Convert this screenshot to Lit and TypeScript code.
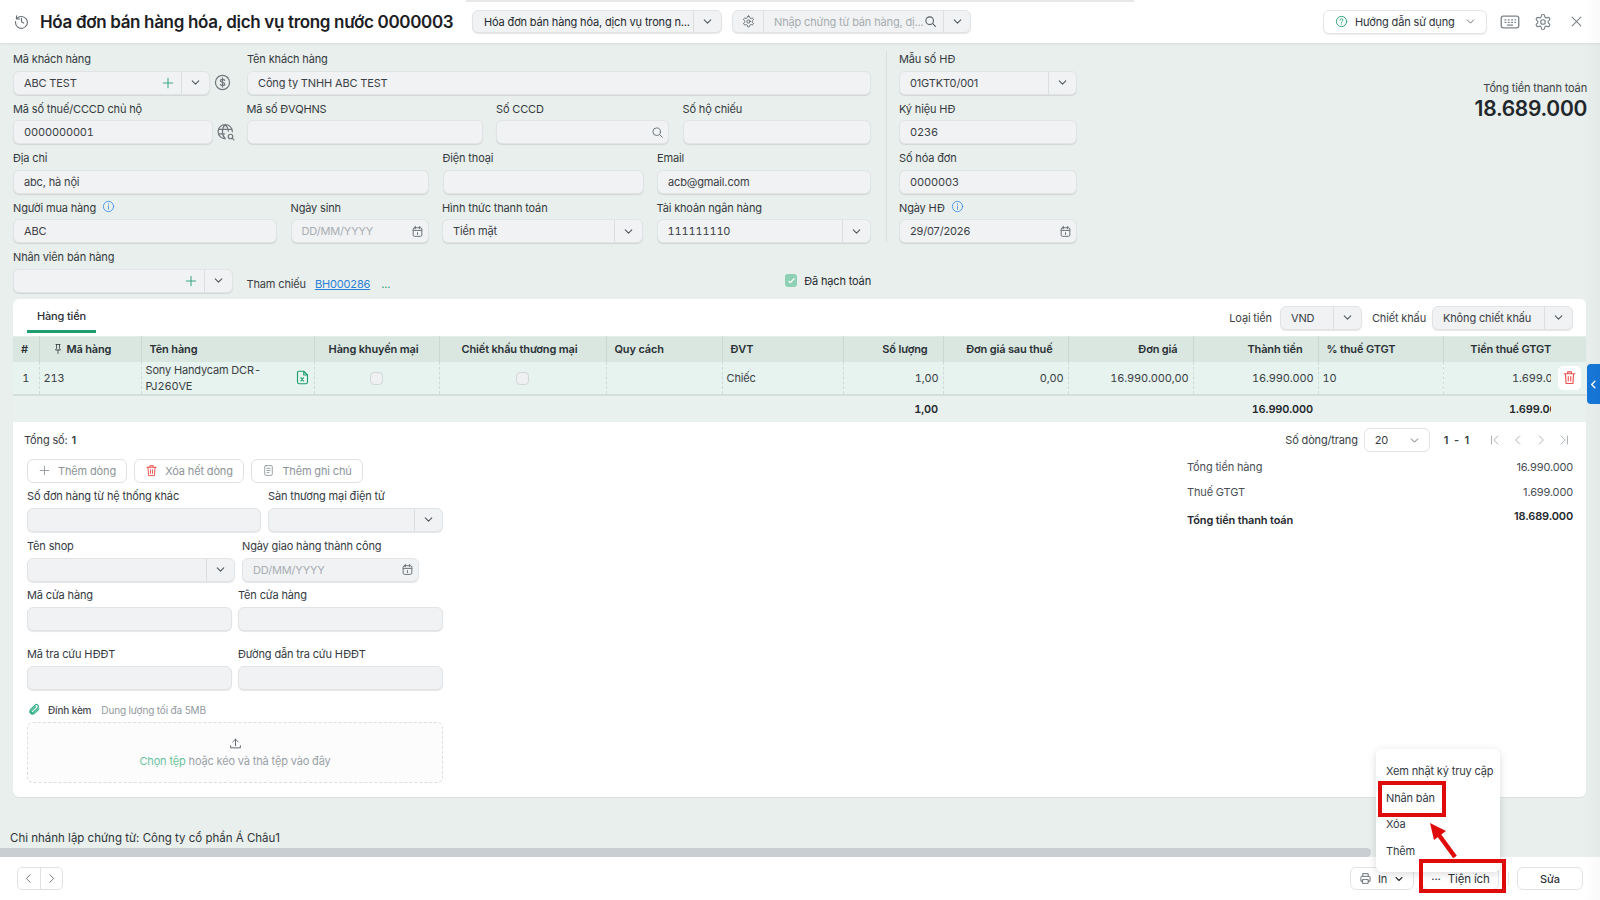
import { LitElement, html, css, svg } from "lit";
import { customElement } from "lit/decorators.js";

const paths: Record<string, unknown> = {
  chevDown: svg`<path d="M6 9l6 6 6-6"/>`,
  chevLeft: svg`<path d="M15 5l-7 7 7 7"/>`,
  chevRight: svg`<path d="M9 5l7 7-7 7"/>`,
  first: svg`<path d="M17 5l-7 7 7 7M6 5v14"/>`,
  last: svg`<path d="M7 5l7 7-7 7M18 5v14"/>`,
  plus: svg`<path d="M12 4v16M4 12h16"/>`,
  close: svg`<path d="M5 5l14 14M19 5L5 19"/>`,
  search: svg`<circle cx="10.5" cy="10.5" r="7"/><path d="M16 16l5 5"/>`,
  calendar: svg`<rect x="4" y="5" width="16" height="16" rx="2.5"/><path d="M4 10h16M8 2.5V7M16 2.5V7M12 14v3.5"/>`,
  info: svg`<circle cx="12" cy="12" r="9.5"/><path d="M12 11v6M12 7v1"/>`,
  help: svg`<circle cx="12" cy="12" r="9.5"/><path d="M9.5 9.5a2.5 2.5 0 1 1 3.6 2.2c-.8.4-1.1 1-1.1 1.8M12 16.5v.5"/>`,
  dollar: svg`<circle cx="12" cy="12" r="10"/><path d="M15 9c-.5-1-1.600-1.500-3-1.500-1.700 0-3 .8-3 2.200 0 3 6.200 1.500 6.200 4.500 0 1.400-1.300 2.300-3.200 2.300-1.400 0-2.600-.6-3.100-1.600M12 5.500v13"/>`,
  globe: svg`<path d="M11 21a9.500 9.500 0 1 1 9.500-9.500M2 8.500h18M2 14.500h8M11 2c-5 5-5 14 0 19M11 2c2.800 2.800 4 6 4.200 9"/><circle cx="18" cy="18" r="3"/><path d="M20.200 20.200l2.300 2.300"/>`,
  gear: svg`<circle cx="12" cy="12" r="3"/><path d="M12.220 2h-.44a2 2 0 0 0-2 2v.18a2 2 0 0 1-1 1.730l-.43.250a2 2 0 0 1-2 0l-.15-.08a2 2 0 0 0-2.730.730l-.22.380a2 2 0 0 0 .730 2.730l.15.100a2 2 0 0 1 1 1.720v.510a2 2 0 0 1-1 1.740l-.15.090a2 2 0 0 0-.730 2.730l.22.380a2 2 0 0 0 2.730.730l.15-.08a2 2 0 0 1 2 0l.43.250a2 2 0 0 1 1 1.730V20a2 2 0 0 0 2 2h.44a2 2 0 0 0 2-2v-.18a2 2 0 0 1 1-1.730l.43-.25a2 2 0 0 1 2 0l.15.080a2 2 0 0 0 2.730-.730l.22-.39a2 2 0 0 0-.730-2.730l-.15-.08a2 2 0 0 1-1-1.740v-.5a2 2 0 0 1 1-1.740l.15-.09a2 2 0 0 0 .730-2.730l-.22-.38a2 2 0 0 0-2.730-.730l-.15.080a2 2 0 0 1-2 0l-.43-.25a2 2 0 0 1-1-1.730V4a2 2 0 0 0-2-2z"/>`,
  keyboard: svg`<rect x="1.500" y="5" width="21" height="14" rx="2.500"/><path d="M6 9.500h1M10 9.500h1M14 9.500h1M18 9.500h.500M6 12.500h1M10 12.500h1M14 12.500h1M18 12.500h.500M9 15.800h6"/>`,
  history: svg`<path d="M4.500 7.500A9.500 9.500 0 1 1 2.500 12M4 3v5h5M12 7v5.500l3.500 2"/>`,
  pin: svg`<path d="M8 3h8M9 3v8l-2 3h10l-2-3V3M12 14v7"/>`,
  excel: svg`<path d="M6 2h8l6 6v11a3 3 0 0 1-3 3H7a3 3 0 0 1-3-3V4a2 2 0 0 1 2-2zM14 2v6h6M9.500 12.500l4 5M13.500 12.500l-4 5"/>`,
  trash: svg`<path d="M3.500 6h17M9 6V3h6v3M5.500 6l1 15.500h11l1-15.500M10 10.500v7M14 10.500v7"/>`,
  note: svg`<rect x="5" y="3" width="14" height="18" rx="2"/><path d="M9 8h6M9 12h6M9 16h4"/>`,
  printer: svg`<path d="M7 8V3h10v5M7 17H3.500V9.500A1.500 1.500 0 0 1 5 8h14a1.500 1.500 0 0 1 1.500 1.500V17H17"/><rect x="7" y="14" width="10" height="7"/>`,
  upload: svg`<path d="M12 16V4M7 9l5-5 5 5M3 16v4h18v-4"/>`,
  clip: svg`<path d="M20 11l-8.500 8.500a5 5 0 0 1-7-7L13 4a3.500 3.500 0 0 1 5 5l-8.500 8.500a2 2 0 0 1-3-3L14 7"/>`,
};

const icon = (name: string, size = 14, sw = 2) =>
  html`<svg class="ic" width=${size} height=${size} viewBox="0 0 24 24" fill="none" stroke="currentColor" stroke-width=${sw} stroke-linecap="round" stroke-linejoin="round">${paths[name]}</svg>`;

@customElement("app-root")
export class AppRoot extends LitElement {
  static styles = css`
    :host {
      display: flex;
      flex-direction: column;
      position: relative;
      width: 1600px;
      height: 900px;
      overflow: hidden;
      background: #fff;
      color: #24292e;
      font: 11px/16px Inter, "Noto Sans", sans-serif;
      letter-spacing: -0.15px;
    }
    .ic { display: block; flex: none; }

    /* top bar */
    .topbar {
      height: 43px;
      flex: none;
      box-sizing: border-box;
      display: flex;
      align-items: center;
      padding: 0 16px 0 14px;
      position: relative;
      box-shadow: 0 1px 2px rgba(0, 0, 0, 0.08);
      z-index: 1;
    }
    .loadbar {
      position: absolute;
      top: 0;
      left: 466px;
      width: 668px;
      height: 2px;
      background: #e6e8e8;
    }
    .hist { color: #6a7176; margin-right: 11px; }
    .title { font-size: 17px; line-height: 24px; font-weight: 600; letter-spacing: -0.33px; color: #1c2024; white-space: nowrap; width: 432px; }
    .group {
      height: 23px;
      box-sizing: border-box;
      display: flex;
      align-items: center;
      background: #f1f2f4;
      border: 1px solid #e1e4e6;
      border-radius: 6px;
      box-shadow: 0 1px 1px rgba(0, 0, 0, 0.1);
    }
    .doc-type { width: 250px; }
    .doc-type .val { flex: 1; padding-left: 11px; white-space: nowrap; }
    .doc-search { width: 239px; margin-left: 10px; }
    .gear-cell { width: 30px; height: 100%; display: flex; align-items: center; justify-content: center; border-right: 1px solid #dfe2e4; color: #5f666b; }
    .ph { flex: 1; padding-left: 10px; color: #a6acb0; white-space: nowrap; }
    .s-ic { color: #565d62; margin-right: 6px; }
    .arrow {
      width: 27px;
      height: 100%;
      flex: none;
      display: flex;
      align-items: center;
      justify-content: center;
      border-left: 1px solid #dcdfe1;
      color: #50575c;
    }
    .doc-search .arrow { width: 26px; }
    .spacer { flex: 1; }
    .help {
      width: 164px;
      height: 24px;
      box-sizing: border-box;
      display: flex;
      align-items: center;
      padding-left: 11px;
      gap: 7px;
      background: #fff;
      border: 1px solid #e3e6e8;
      border-radius: 6px;
      box-shadow: 0 1px 1px rgba(0, 0, 0, 0.08);
      color: #2d3338;
      white-space: nowrap;
    }
    .help .g { color: #2ba678; }
    .help .d { color: #6a7176; margin-left: 2px; }
    .tool { color: #7d8489; margin-left: 14px; }
    .tool.kb { margin-left: 13px; }
    .tool.x { margin-left: 17px; }

    /* main */
    .main {
      flex: 1;
      min-height: 0;
      display: flex;
      flex-direction: column;
      background: #e9efec;
    }
    .form {
      height: 256px;
      flex: none;
      box-sizing: border-box;
      padding: 7.5px 13px 0;
      display: flex;
    }
    .form-left { width: 858px; display: flex; flex-direction: column; gap: 5.5px; }
    .row { display: grid; column-gap: 13.5px; }
    .r1 { grid-template-columns: 218px 1fr; column-gap: 16px; }
    .r2 { grid-template-columns: 220px 236px 173px 1fr; }
    .r3 { grid-template-columns: 416px 201px 1fr; }
    .r4 { grid-template-columns: 264px 138px 201px 1fr; }
    .r5 { grid-template-columns: 220px 1fr; }
    .field { min-width: 0; }
    .lab { height: 20px; box-sizing: border-box; padding-top: 0.5px; display: flex; gap: 6px; color: #343a3f; white-space: nowrap; }
    .lab .i { color: #3b8fe8; }
    .inp {
      height: 24px;
      box-sizing: border-box;
      display: flex;
      align-items: center;
      background: #f1f2f4;
      border: 1px solid #e1e4e6;
      border-radius: 6px;
      box-shadow: 0 1px 1px rgba(0, 0, 0, 0.1);
      color: #3a4045;
    }
    .inp .val { flex: 1; min-width: 0; padding-left: 10px; white-space: nowrap; }
    .inp .muted { color: #a9afb3; }
    .inp .num { font-variant-numeric: tabular-nums; }
    .inp .plus { color: #3aa981; margin-right: 6px; }
    .inp .end { color: #6c7378; margin-right: 4px; }
    .with-ic { display: flex; align-items: center; gap: 4px; }
    .with-ic .inp { flex: 1; min-width: 0; }
    .with-ic .side { color: #71787d; }
    .with-ic .inp.fixed { flex: none; width: 200px; }
    .globe { margin-right: -3px; }
    .ref { display: flex; align-items: center; padding-top: 20px; height: 24px; }
    .ref .t { color: #3a4045; margin-top: 6px; }
    .ref a { margin: 6px 0 0 9px; color: #2b7fd6; text-decoration: underline; }
    .ref .dots { margin: 6px 0 0 11px; color: #2b9a76; }
    .ref .chk { margin-left: auto; display: flex; align-items: center; gap: 7px; }
    .tick {
      width: 12px;
      height: 13px;
      border-radius: 3px;
      background: #8ed0b4;
      color: #fff;
      display: flex;
      align-items: center;
      justify-content: center;
    }
    .divider { width: 1px; height: 191px; background: #d8dfdc; margin: 0.5px 0 0 15px; }
    .form-right { width: 178px; margin-left: 12px; display: flex; flex-direction: column; gap: 5.5px; }
    .total { margin-left: auto; padding-top: 29px; text-align: right; }
    .total .l { color: #3b4146; margin-bottom: -1px; }
    .total .v { font-size: 21px; line-height: 28px; font-weight: 600; letter-spacing: -0.3px; color: #22272b; }

    /* card */
    .card {
      height: 498px;
      flex: none;
      margin: 0 14px 0 13px;
      background: #fff;
      border-radius: 6px;
      box-shadow: 0 1px 1px rgba(0, 0, 0, 0.06);
      display: flex;
      flex-direction: column;
      overflow: hidden;
    }
    .tabbar { height: 37px; flex: none; display: flex; align-items: center; padding-right: 13px; box-sizing: border-box; }
    .tab {
      margin-left: 14px;
      width: 69px;
      height: 37px;
      box-sizing: border-box;
      padding-top: 9px;
      text-align: center;
      font-weight: 500;
      color: #2a3035;
      position: relative;
    }
    .tab::after { content: ""; position: absolute; left: 0; right: 0; top: 31px; height: 2.5px; background: #1e9e6f; }
    .tabbar .lbl { color: #3b4146; margin-right: 8px; }
    .tabbar .lbl.d { margin-right: 6px; }
    .sel { margin-right: 10px; }
    .sel.cur { width: 82px; }
    .sel.disc { width: 141px; margin-right: 0; }

    table { width: 1573px; table-layout: fixed; border-collapse: collapse; flex: none; }
    th {
      height: 25px;
      padding: 0 8px;
      box-sizing: border-box;
      background: #d9e7e0;
      border-right: 1px solid #c9d8d1;
      border-top: 1px solid #e3ece8;
      font-weight: 600;
      text-align: left;
      color: #2a3035;
      white-space: nowrap;
    }
    th.c { text-align: center; padding-right: 14px; }
    th.r { text-align: right; padding-right: 15px; }
    th:last-child { border-right: 0; padding-right: 35px; }
    th .w { display: flex; align-items: center; gap: 3px; padding-left: 4px; }
    td {
      height: 31px;
      padding: 0 4px;
      box-sizing: border-box;
      background: #e6f3ee;
      border-right: 1px dashed #d0dcd7;
      border-bottom: 2px solid #d6dedb;
      color: #3a4045;
      font-variant-numeric: tabular-nums;
    }
    td.c { text-align: center; }
    td.r { text-align: right; }
    td:last-child { border-right: 0; padding-right: 35px; position: relative; }
    .prod { display: flex; align-items: center; gap: 20px; line-height: 16px; }
    .prod span { width: 130px; }
    .prod .ic { color: #1e9e6f; }
    .box { display: inline-block; vertical-align: middle; width: 13px; height: 13px; box-sizing: border-box; background: #eef0f1; border: 1px solid #d3d7d9; border-radius: 4px; }
    .clip { display: block; width: 39px; margin-left: auto; overflow: hidden; white-space: nowrap; }
    .clip.b { width: 42px; }
    .del {
      position: absolute;
      top: 4px;
      right: 5px;
      width: 23px;
      height: 24px;
      background: #fff;
      border-radius: 5px;
      color: #ef4f4f;
      display: flex;
      align-items: center;
      justify-content: center;
    }
    .sum td { height: 27px; background: #e9f1ee; border: 0; font-weight: 600; color: #24292e; }
    .sum td.r { padding-right: 5px; }
    .sum td:last-child { padding-right: 35px; }

    /* lower */
    .lower { flex: 1; min-height: 0; display: flex; justify-content: space-between; padding: 7px 13px 0 14px; }
    .lleft { width: 416px; display: flex; flex-direction: column; }
    .count { margin-left: -3px; height: 23px; display: flex; align-items: center; color: #3a4045; }
    .count b { font-weight: 600; margin-left: 4px; }
    .btns { display: flex; gap: 7px; margin-top: 7px; margin-bottom: 5px; }
    .btn {
      height: 24px;
      box-sizing: border-box;
      display: flex;
      align-items: center;
      justify-content: center;
      gap: 7px;
      background: #fff;
      border: 1px solid #dfe2e4;
      border-radius: 6px;
      color: #8d9498;
    }
    .btn.add { width: 100px; }
    .btn.clr { width: 110px; }
    .btn.clr .ic { color: #e9524f; }
    .btn.nt { width: 112px; }
    .lr { display: grid; }
    .l1 { grid-template-columns: 234px 175px; column-gap: 7px; margin-bottom: 6px; }
    .l2 { grid-template-columns: 208px 177px; column-gap: 7px; margin-bottom: 5px; }
    .l3 { grid-template-columns: 205px 205px; column-gap: 6px; margin-bottom: 15px; }
    .l4 { grid-template-columns: 205px 205px; column-gap: 6px; }
    .attach { height: 20px; margin-top: 10px; display: flex; align-items: center; margin-left: 1px; font-size: 10px; }
    .attach .ic { color: #2fb083; }
    .attach b { font-weight: 500; margin-left: 7px; color: #454b50; }
    .attach span { margin-left: 10px; color: #92999d; }
    .drop {
      height: 61px;
      margin-top: 2px;
      box-sizing: border-box;
      border: 1px dashed #dcdfe1;
      border-radius: 6px;
      background: #fcfcfd;
      display: flex;
      flex-direction: column;
      align-items: center;
      padding-top: 14px;
      gap: 3px;
      color: #9aa1a5;
    }
    .drop .ic { color: #62696e; }
    .drop em { font-style: normal; color: #69c2a0; }

    .lright { width: 386px; display: flex; flex-direction: column; }
    .pager { display: flex; justify-content: flex-end; align-items: center; height: 23px; margin-right: 2px; color: #3a4045; }
    .page-sel {
      width: 66px;
      height: 24px;
      box-sizing: border-box;
      margin-left: 6px;
      display: flex;
      align-items: center;
      justify-content: space-between;
      padding: 0 8px 0 10px;
      border: 1px solid #e1e4e6;
      border-radius: 6px;
    }
    .page-sel .ic { color: #6a7176; }
    .range { font-weight: 600; margin: 0 19px 0 14px; word-spacing: 3px; }
    .pg { display: flex; gap: 9px; color: #a7adb1; }
    .sumrow { display: flex; justify-content: space-between; color: #4a5055; height: 25px; }
    .sumrow.first { margin-top: 7px; }
    .sumrow.t { color: #24292e; font-weight: 600; }
    .sumrow.t span:first-child { margin-top: 3px; }
    .sumrow.t span:last-child { margin-top: -1px; }

    .branch { margin-top: auto; height: 18px; padding-left: 10px; font-size: 11.5px; letter-spacing: 0; color: #2e3439; }
    .scroll { height: 9px; flex: none; background: #e9efec; }
    .scroll div { width: 1371px; height: 9px; background: #c9ced2; border-radius: 0 5px 5px 0; }

    /* footer */
    .footer {
      height: 43px;
      flex: none;
      box-sizing: border-box;
      display: flex;
      align-items: center;
      padding: 0 17px;
      gap: 8px;
    }
    .pn { display: flex; width: 46px; height: 23px; box-sizing: border-box; border: 1px solid #dfe2e4; border-radius: 5px; color: #6a7176; }
    .pn div { flex: 1; display: flex; align-items: center; justify-content: center; }
    .pn div + div { border-left: 1px solid #dfe2e4; }
    .fbtn {
      height: 23px;
      box-sizing: border-box;
      display: flex;
      align-items: center;
      justify-content: center;
      gap: 6px;
      background: #fff;
      border: 1px solid #e1e4e6;
      border-radius: 6px;
      color: #2d3338;
    }
    .fbtn.print { width: 64px; margin-left: auto; }
    .fbtn.print .ic:first-child { color: #62696e; }
    .fbtn.util { width: 77px; gap: 7px; font-size: 11.5px; }
    .sep { width: 1px; height: 13px; background: #e4e7e8; margin-left: 1px; }
    .fbtn.edit { width: 66px; font-weight: 500; }

    /* dropdown, annotations and edge shade lie over the page */
    .menu {
      position: absolute;
      left: 1376px;
      top: 749px;
      width: 124px;
      height: 123px;
      box-sizing: border-box;
      padding: 9px 0 0 10px;
      background: #fff;
      border-radius: 6px;
      box-shadow: 0 2px 8px rgba(0, 0, 0, 0.14);
      z-index: 2;
      color: #343a3f;
    }
    .menu div { height: 26.5px; line-height: 26.5px; white-space: nowrap; }
    .mark { position: absolute; box-sizing: border-box; border: 4px solid #df0a0a; z-index: 3; pointer-events: none; }
    .m-dup { left: 1378px; top: 781px; width: 68px; height: 36px; }
    .m-util { left: 1419px; top: 859px; width: 87px; height: 34px; }
    .red-arrow { position: absolute; left: 1420px; top: 815px; z-index: 3; }
    .side-tab {
      position: absolute;
      right: 0;
      top: 364px;
      width: 13px;
      height: 40px;
      background: #1677d8;
      border-radius: 4px 0 0 4px;
      color: #fff;
      display: flex;
      align-items: center;
      justify-content: center;
      z-index: 1;
    }
    .shade {
      position: absolute;
      top: 0;
      bottom: 0;
      right: 0;
      width: 16px;
      background: linear-gradient(to right, rgba(0, 0, 0, 0), rgba(0, 0, 0, 0.025));
      pointer-events: none;
      z-index: 1;
    }
  `;

  private field(label: string, value = "", opts: { info?: boolean; end?: string; arrow?: boolean; muted?: boolean } = {}) {
    return html`<div class="field">
      <div class="lab">${label}${opts.info ? html`<span class="i">${icon("info", 13, 1.6)}</span>` : ""}</div>
      ${this.input(value, opts)}
    </div>`;
  }

  private input(value: string, opts: { end?: string; arrow?: boolean; muted?: boolean; plus?: boolean } = {}) {
    const num = /^\d+$/.test(value) ? "num" : "";
    return html`<div class="inp">
      <span class="val ${num} ${opts.muted ? "muted" : ""}">${value}</span>
      ${opts.plus ? html`<span class="plus">${icon("plus", 14, 1.8)}</span>` : ""}
      ${opts.end ? html`<span class="end">${icon(opts.end, 13, 1.8)}</span>` : ""}
      ${opts.arrow ? html`<span class="arrow">${icon("chevDown", 13, 2)}</span>` : ""}
    </div>`;
  }

  render() {
    return html`
      <header class="topbar">
        <div class="loadbar"></div>
        <span class="hist">${icon("history", 15, 1.8)}</span>
        <div class="title">Hóa đơn bán hàng hóa, dịch vụ trong nước 0000003</div>
        <div class="group doc-type">
          <span class="val">Hóa đơn bán hàng hóa, dịch vụ trong n...</span>
          <span class="arrow">${icon("chevDown", 13)}</span>
        </div>
        <div class="group doc-search">
          <span class="gear-cell">${icon("gear", 13, 1.8)}</span>
          <span class="ph">Nhập chứng từ bán hàng, dị...</span>
          <span class="s-ic">${icon("search", 13)}</span>
          <span class="arrow">${icon("chevDown", 13)}</span>
        </div>
        <div class="spacer"></div>
        <div class="help">
          <span class="g">${icon("help", 13, 1.8)}</span>
          <span>Hướng dẫn sử dụng</span>
          <span class="d">${icon("chevDown", 13, 1.8)}</span>
        </div>
        <span class="tool kb">${icon("keyboard", 20, 1.6)}</span>
        <span class="tool">${icon("gear", 18, 1.6)}</span>
        <span class="tool x">${icon("close", 15, 1.8)}</span>
      </header>

      <main class="main">
        <section class="form">
          <div class="form-left">
            <div class="row r1">
              <div class="field">
                <div class="lab">Mã khách hàng</div>
                <div class="with-ic">
                  ${this.input("ABC TEST", { plus: true, arrow: true })}
                  <span class="side">${icon("dollar", 17, 1.7)}</span>
                </div>
              </div>
              ${this.field("Tên khách hàng", "Công ty TNHH ABC TEST")}
            </div>
            <div class="row r2">
              <div class="field">
                <div class="lab">Mã số thuế/CCCD chủ hộ</div>
                <div class="with-ic globe">
                  <div class="inp fixed"><span class="val num">0000000001</span></div>
                  <span class="side">${icon("globe", 18, 1.6)}</span>
                </div>
              </div>
              ${this.field("Mã số ĐVQHNS")}
              ${this.field("Số CCCD", "", { end: "search" })}
              ${this.field("Số hộ chiếu")}
            </div>
            <div class="row r3">
              ${this.field("Địa chỉ", "abc, hà nội")}
              ${this.field("Điện thoại")}
              ${this.field("Email", "acb@gmail.com")}
            </div>
            <div class="row r4">
              ${this.field("Người mua hàng", "ABC", { info: true })}
              ${this.field("Ngày sinh", "DD/MM/YYYY", { end: "calendar", muted: true })}
              ${this.field("Hình thức thanh toán", "Tiền mặt", { arrow: true })}
              ${this.field("Tài khoản ngân hàng", "111111110", { arrow: true })}
            </div>
            <div class="row r5">
              <div class="field">
                <div class="lab">Nhân viên bán hàng</div>
                ${this.input("", { plus: true, arrow: true })}
              </div>
              <div class="ref">
                <span class="t">Tham chiếu</span>
                <a>BH000286</a>
                <span class="dots">...</span>
                <span class="chk">
                  <span class="tick"><svg width="9" height="9" viewBox="0 0 24 24" fill="none" stroke="currentColor" stroke-width="3"><path d="M4 13l5 5L20 6"/></svg></span>
                  <span>Đã hạch toán</span>
                </span>
              </div>
            </div>
          </div>
          <div class="divider"></div>
          <div class="form-right">
            ${this.field("Mẫu số HĐ", "01GTKT0/001", { arrow: true })}
            ${this.field("Ký hiệu HĐ", "0236")}
            ${this.field("Số hóa đơn", "0000003")}
            ${this.field("Ngày HĐ", "29/07/2026", { end: "calendar", info: true })}
          </div>
          <div class="total">
            <div class="l">Tổng tiền thanh toán</div>
            <div class="v">18.689.000</div>
          </div>
        </section>

        <section class="card">
          <div class="tabbar">
            <div class="tab">Hàng tiền</div>
            <div class="spacer"></div>
            <span class="lbl">Loại tiền</span>
            <div class="inp sel cur"><span class="val">VND</span><span class="arrow">${icon("chevDown", 13)}</span></div>
            <span class="lbl d">Chiết khấu</span>
            <div class="inp sel disc"><span class="val">Không chiết khấu</span><span class="arrow">${icon("chevDown", 13)}</span></div>
          </div>

          <table>
            <colgroup>
              ${[26, 102, 173, 125, 167, 116, 121, 100, 125, 125, 125, 125, 143].map((w) => html`<col width=${w} />`)}
            </colgroup>
            <thead>
              <tr>
                <th>#</th>
                <th><div class="w">${icon("pin", 12, 1.5)}Mã hàng</div></th>
                <th>Tên hàng</th>
                <th class="c">Hàng khuyến mại</th>
                <th class="c">Chiết khấu thương mại</th>
                <th>Quy cách</th>
                <th>ĐVT</th>
                <th class="r">Số lượng</th>
                <th class="r">Đơn giá sau thuế</th>
                <th class="r">Đơn giá</th>
                <th class="r">Thành tiền</th>
                <th>% thuế GTGT</th>
                <th class="r">Tiền thuế GTGT</th>
              </tr>
            </thead>
            <tbody>
              <tr>
                <td class="c">1</td>
                <td>213</td>
                <td><div class="prod"><span>Sony Handycam DCR-PJ260VE</span>${icon("excel", 15, 1.8)}</div></td>
                <td class="c"><span class="box"></span></td>
                <td class="c"><span class="box"></span></td>
                <td></td>
                <td>Chiếc</td>
                <td class="r">1,00</td>
                <td class="r">0,00</td>
                <td class="r">16.990.000,00</td>
                <td class="r">16.990.000</td>
                <td>10</td>
                <td class="r"><span class="clip">1.699.000</span><span class="del">${icon("trash", 15, 1.8)}</span></td>
              </tr>
              <tr class="sum">
                <td colspan="7"></td>
                <td class="r">1,00</td>
                <td></td>
                <td></td>
                <td class="r">16.990.000</td>
                <td></td>
                <td class="r"><span class="clip b">1.699.000</span></td>
              </tr>
            </tbody>
          </table>

          <div class="lower">
            <div class="lleft">
              <div class="count">Tổng số:<b>1</b></div>
              <div class="btns">
                <div class="btn add">${icon("plus", 13, 1.6)}Thêm dòng</div>
                <div class="btn clr">${icon("trash", 13, 1.8)}Xóa hết dòng</div>
                <div class="btn nt">${icon("note", 13, 1.6)}Thêm ghi chú</div>
              </div>
              <div class="lr l1">
                ${this.field("Số đơn hàng từ hệ thống khác")}
                ${this.field("Sàn thương mại điện tử", "", { arrow: true })}
              </div>
              <div class="lr l2">
                ${this.field("Tên shop", "", { arrow: true })}
                ${this.field("Ngày giao hàng thành công", "DD/MM/YYYY", { end: "calendar", muted: true })}
              </div>
              <div class="lr l3">
                ${this.field("Mã cửa hàng")}
                ${this.field("Tên cửa hàng")}
              </div>
              <div class="lr l4">
                ${this.field("Mã tra cứu HĐĐT")}
                ${this.field("Đường dẫn tra cứu HĐĐT")}
              </div>
              <div class="attach">${icon("clip", 13, 2.2)}<b>Đính kèm</b><span>Dung lượng tối đa 5MB</span></div>
              <div class="drop">
                ${icon("upload", 13, 1.8)}
                <div><em>Chọn tệp</em> hoặc kéo và thả tệp vào đây</div>
              </div>
            </div>

            <div class="lright">
              <div class="pager">
                <span>Số dòng/trang</span>
                <div class="page-sel"><span>20</span>${icon("chevDown", 13, 1.8)}</div>
                <span class="range">1 - 1</span>
                <div class="pg">
                  ${icon("first", 14, 1.6)}${icon("chevLeft", 14, 1.6)}${icon("chevRight", 14, 1.6)}${icon("last", 14, 1.6)}
                </div>
              </div>
              <div class="sumrow first"><span>Tổng tiền hàng</span><span>16.990.000</span></div>
              <div class="sumrow"><span>Thuế GTGT</span><span>1.699.000</span></div>
              <div class="sumrow t"><span>Tổng tiền thanh toán</span><span>18.689.000</span></div>
            </div>
          </div>
        </section>

        <div class="branch">Chi nhánh lập chứng từ: Công ty cổ phần Á Châu1</div>
        <div class="scroll"><div></div></div>
      </main>

      <footer class="footer">
        <div class="pn"><div>${icon("chevLeft", 13, 1.8)}</div><div>${icon("chevRight", 13, 1.8)}</div></div>
        <div class="fbtn print">${icon("printer", 13, 1.7)}<span>In</span>${icon("chevDown", 12, 2.2)}</div>
        <div class="fbtn util"><span>···</span><span>Tiện ích</span></div>
        <div class="sep"></div>
        <div class="fbtn edit">Sửa</div>
      </footer>

      <div class="side-tab">${icon("chevLeft", 11, 3)}</div>
      <div class="menu">
        <div>Xem nhật ký truy cập</div>
        <div>Nhân bản</div>
        <div>Xóa</div>
        <div>Thêm</div>
      </div>
      <div class="mark m-dup"></div>
      <div class="mark m-util"></div>
      <svg class="red-arrow" width="44" height="48" viewBox="0 0 44 48">
        <path d="M35 42L16 16" fill="none" stroke="#df0a0a" stroke-width="4.5" />
        <path d="M10 8l16 8-12 9z" fill="#df0a0a" />
      </svg>
      <div class="shade"></div>
    `;
  }
}
